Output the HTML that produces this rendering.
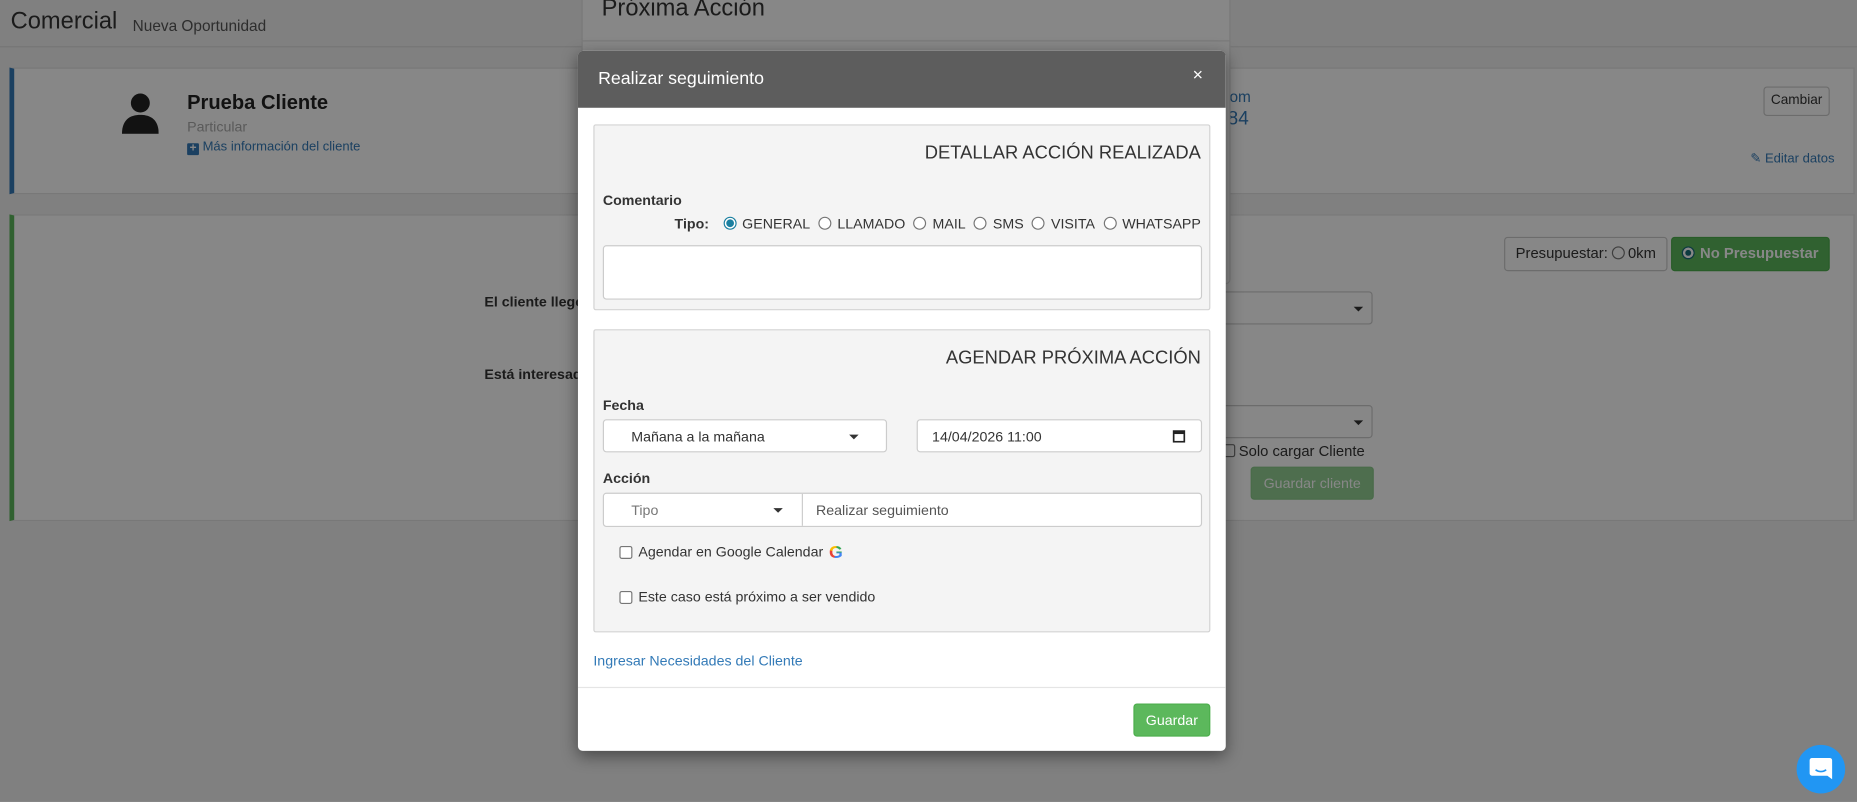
<!DOCTYPE html>
<html><head><meta charset="utf-8"><style>
*{box-sizing:border-box;margin:0;padding:0}
html,body{width:1857px;height:802px;overflow:hidden;background:#7a7a7a}
#w{position:absolute;left:0;top:0;width:1568px;height:677px;transform:scale(1.18431);transform-origin:0 0;font-family:"Liberation Sans",Arial,sans-serif;color:#333;font-size:12px;background:#f2f2f2}
.a{position:absolute}
.card{position:absolute;background:#fff;border:1px solid #e3e3e3}
.btn{position:absolute;border:1px solid #ccc;border-radius:3px;background:#fff;text-align:center}
.sel{position:absolute;background:#fff;border:1px solid #ccc;border-radius:3px}
.caret{position:absolute;width:0;height:0;border-left:4px solid transparent;border-right:4px solid transparent;border-top:4px solid #333}
.rad{display:inline-block;width:11px;height:11px;border:1px solid #767676;border-radius:50%;vertical-align:-1px;margin:0 5px 0 7px;background:#fff}
.chk{position:absolute;width:11px;height:11px;border:1px solid #767676;border-radius:2px;background:#fff}
#ov{position:absolute;left:0;top:0;width:1568px;height:677px;background:rgba(0,0,0,.47)}
.sec{position:absolute;left:13px;width:521px;background:#f4f4f4;border:1px solid #d3d3d3;border-radius:2px}
.h{position:absolute;right:7px;font-size:15.5px;color:#333}
b.l{position:absolute;font-size:12px;font-weight:bold;color:#333}
</style></head><body><div id="w">
<div class="a" style="left:9px;top:7px;font-size:20px;color:#333">Comercial</div>
<div class="a" style="left:112px;top:14px;font-size:13px;color:#555">Nueva Oportunidad</div>
<div class="a" style="left:0;top:39px;width:1568px;height:1px;background:#ddd"></div>

<div class="card" style="left:8px;top:57px;width:1558px;height:107px;border-left:4px solid #337ab7"></div>
<svg class="a" style="left:103px;top:78px" width="31" height="35" viewBox="0 0 31 35"><circle cx="15.5" cy="9" r="8" fill="#222"/><path d="M0 35 C0 22 8 19 15.5 19 C23 19 31 22 31 35Z" fill="#222"/></svg>
<div class="a" style="left:158px;top:77px;font-size:17px;font-weight:bold;color:#222">Prueba Cliente</div>
<div class="a" style="left:158px;top:100px;font-size:12px;color:#aaa">Particular</div>
<div class="a" style="left:158px;top:118px;font-size:11px;color:#337ab7"><span style="display:inline-block;width:10px;height:10px;background:#337ab7;color:#fff;font-size:10px;line-height:10px;text-align:center;border-radius:1px;font-weight:bold;vertical-align:-1px">+</span> Más información del cliente</div>
<div class="a" style="left:1028px;top:74px;font-size:13px;color:#337ab7">.com</div>
<div class="a" style="left:1020px;top:92px;font-size:16px;color:#337ab7">1184</div>
<div class="btn" style="left:1489px;top:73px;width:56px;height:25px;line-height:23px;font-size:11.5px">Cambiar</div>
<div class="a" style="left:1478px;top:127px;font-size:11px;color:#337ab7">✎ Editar datos</div>

<div class="card" style="left:8px;top:181px;width:1558px;height:259px;border-left:4px solid #5cb85c"></div>
<div class="btn" style="left:1270px;top:200px;width:138px;height:29px;line-height:27px;font-size:12.5px">Presupuestar:<span class="rad" style="margin:0 3px"></span>0km</div>
<div class="btn" style="left:1411px;top:200px;width:134px;height:29px;line-height:27px;background:#5cb85c;border-color:#4cae4c;color:#fff;font-weight:bold;font-size:12.5px"><span class="rad" style="margin:0 4px 0 0;border-color:#1a6e7a;box-shadow:inset 0 0 0 2px #fff;background:#1a6e7a"></span>No Presupuestar</div>
<div class="a" style="left:409px;top:248px;font-weight:bold;font-size:12px">El cliente llegó</div>
<div class="a" style="left:409px;top:309px;font-weight:bold;font-size:12px">Está interesado</div>
<div class="sel" style="left:1000px;top:246px;width:159px;height:28px"><i class="caret" style="left:142px;top:12px"></i></div>
<div class="sel" style="left:1000px;top:342px;width:159px;height:28px"><i class="caret" style="left:142px;top:12px"></i></div>
<div class="chk" style="left:1032px;top:375px"></div>
<div class="a" style="left:1046px;top:374px;font-size:12.5px">Solo cargar Cliente</div>
<div class="btn" style="left:1056px;top:394px;width:104px;height:28px;line-height:26px;background:#5cb85c;border-color:#4cae4c;color:#fff;font-size:12px;opacity:.65">Guardar cliente</div>

<div class="card" style="left:491px;top:-5px;width:548px;height:245px;border-radius:4px"></div>
<div class="a" style="left:508px;top:-4px;font-size:20px;color:#333">Próxima Acción</div>
<div class="a" style="left:491px;top:34px;width:548px;height:1px;background:#e5e5e5"></div>

<div id="ov"></div>

<div class="a" style="left:488px;top:43px;width:547px;height:591px;background:#fff;border-radius:4px;box-shadow:0 4px 14px rgba(0,0,0,.45);overflow:hidden">
 <div class="a" style="left:0;top:0;width:547px;height:48px;background:#5d5d5d"></div>
 <div class="a" style="left:17px;top:15px;font-size:15px;color:#fff">Realizar seguimiento</div>
 <div class="a" style="left:519px;top:12px;font-size:15px;color:#fff">×</div>

 <div class="sec" style="top:62px;height:157px">
  <div class="h" style="top:15px">DETALLAR ACCIÓN REALIZADA</div>
  <b class="l" style="left:7px;top:56px">Comentario</b>
  <div class="a" style="right:7px;top:76px;font-size:12px;white-space:nowrap"><b style="margin-right:5px">Tipo:</b><span class="rad" style="border-color:#1a7fa0;background:radial-gradient(circle,#1a7fa0 0 3px,#fff 3.5px)"></span>GENERAL<span class="rad"></span>LLAMADO<span class="rad"></span>MAIL<span class="rad"></span>SMS<span class="rad"></span>VISITA<span class="rad"></span>WHATSAPP</div>
  <div class="a" style="left:7px;top:101px;width:506px;height:46px;background:#fff;border:1px solid #ccc;border-radius:3px"></div>
 </div>

 <div class="sec" style="top:235px;height:256px">
  <div class="h" style="top:15px">AGENDAR PRÓXIMA ACCIÓN</div>
  <b class="l" style="left:7px;top:56px">Fecha</b>
  <div class="sel" style="left:7px;top:75px;width:240px;height:28px"><span class="a" style="left:23px;top:7px">Mañana a la mañana</span><i class="caret" style="left:207px;top:12px"></i></div>
  <div class="sel" style="left:272px;top:75px;width:241px;height:28px"><span class="a" style="left:12px;top:7px">14/04/2026 11:00</span><svg class="a" style="left:215px;top:7px" width="11" height="12" viewBox="0 0 11 12"><rect x="1" y="2" width="9" height="9" fill="none" stroke="#222" stroke-width="1.4"/><rect x="1" y="2" width="9" height="2.5" fill="#222"/></svg></div>
  <b class="l" style="left:7px;top:118px">Acción</b>
  <div class="sel" style="left:7px;top:137px;width:506px;height:29px"><span class="a" style="left:23px;top:7px;color:#777">Tipo</span><i class="caret" style="left:143px;top:12px"></i><div class="a" style="left:167px;top:0;width:1px;height:27px;background:#ccc"></div><span class="a" style="left:179px;top:7px;color:#555">Realizar seguimiento</span></div>
  <div class="chk" style="left:21px;top:182px"></div>
  <div class="a" style="left:37px;top:180px">Agendar en Google Calendar</div>
  <div class="a" style="left:198px;top:179px;font-size:15px;font-weight:bold;background:conic-gradient(from 200deg,#ea4335 0 25%,#fbbc05 25% 45%,#34a853 45% 70%,#4285f4 70% 100%);-webkit-background-clip:text;color:transparent">G</div>
  <div class="chk" style="left:21px;top:220px"></div>
  <div class="a" style="left:37px;top:218px">Este caso está próximo a ser vendido</div>
 </div>

 <div class="a" style="left:13px;top:508px;color:#337ab7">Ingresar Necesidades del Cliente</div>
 <div class="a" style="left:0;top:537px;width:547px;height:1px;background:#e5e5e5"></div>
 <div class="btn" style="left:469px;top:551px;width:65px;height:28px;line-height:26px;background:#5cb85c;border-color:#4cae4c;color:#fff;font-size:12px">Guardar</div>
</div>

<div class="a" style="left:1517px;top:629px;width:41px;height:41px;border-radius:50%;background:#2196f3"></div>
<svg class="a" style="left:1527px;top:639px" width="21" height="21" viewBox="0 0 21 21"><path d="M3 1h15a2 2 0 0 1 2 2v16l-4-3H3a2 2 0 0 1-2-2V3a2 2 0 0 1 2-2z" fill="#fff"/><path d="M6 11q4.5 3 9 0" stroke="#2196f3" stroke-width="1.3" fill="none"/></svg>
</div></body></html>
